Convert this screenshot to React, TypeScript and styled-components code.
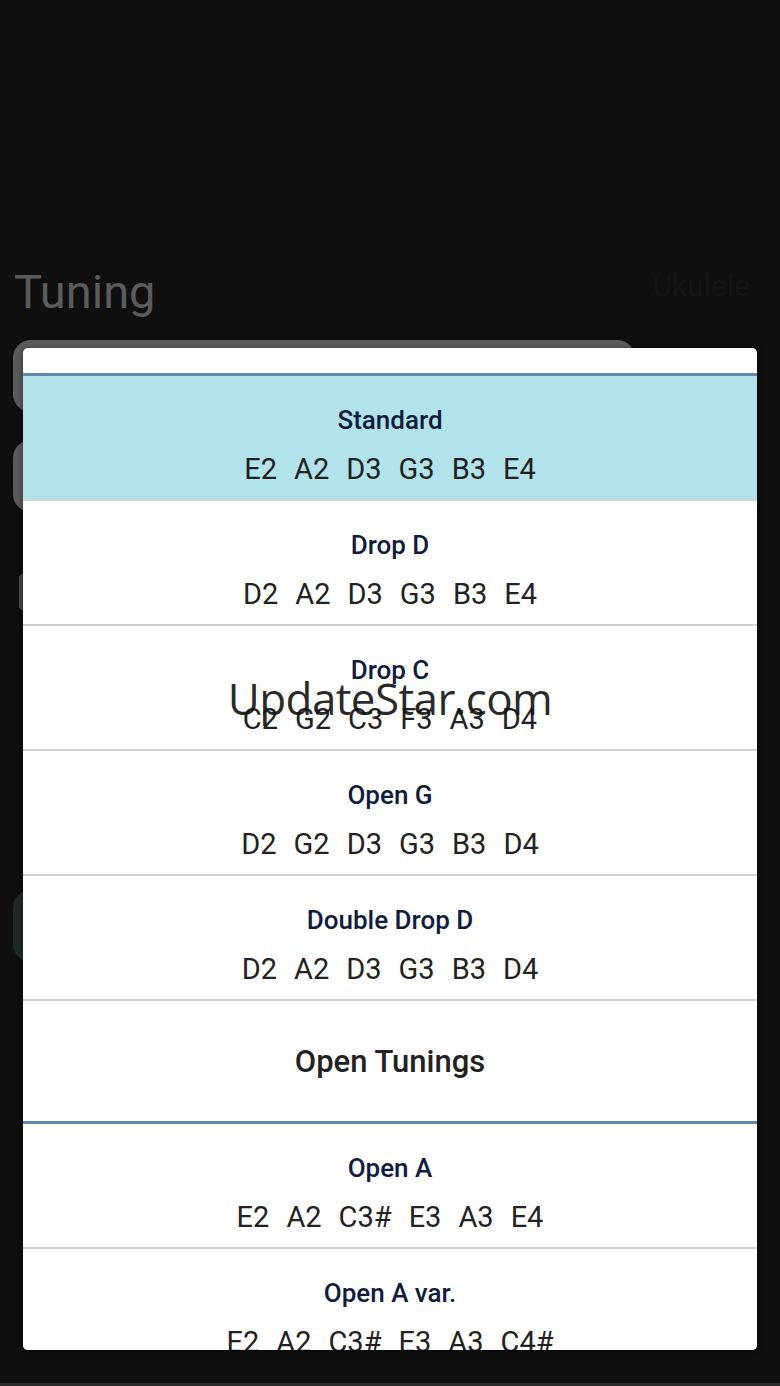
import styled, { createGlobalStyle } from 'styled-components';

const GlobalStyle = createGlobalStyle`
  html, body {
    margin: 0;
    padding: 0;
    background: #0f0f10;
  }
  body {
    font-family: Roboto, "Liberation Sans", sans-serif;
  }
`;

const Screen = styled.div`
  position: relative;
  width: 780px;
  height: 1386px;
  overflow: hidden;
  background: #0f0f10;
`;

const Backdrop = styled.div`
  display: flex;
  flex-direction: column;
  padding: 262px 0 0 13px;
`;

const TopRow = styled.div`
  display: flex;
  justify-content: space-between;
  align-items: flex-start;
  padding-right: 30px;
  height: 72px;
`;

const ScreenTitle = styled.div`
  font-size: 47px;
  color: #5b5b5b;
  padding-left: 1px;
  line-height: 60px;
`;

const FaintLabel = styled.div`
  font-size: 30px;
  color: #151516;
  padding-top: 6px;
`;

const FieldBox = styled.div<{ $width: number; $top: number; $color?: string }>`
  width: ${({ $width }) => $width}px;
  height: 72px;
  margin-top: ${({ $top }) => $top}px;
  border-radius: 18px;
  background: ${({ $color }) => $color || '#5b5b5b'};
`;

const SideTab = styled.div`
  width: 10px;
  height: 36px;
  margin: 62px 0 0 6px;
  border-radius: 4px;
  background: #4a4a4a;
`;

const Dialog = styled.div`
  position: absolute;
  left: 23px;
  top: 348px;
  width: 734px;
  height: 1002px;
  background: #ffffff;
  border-radius: 5px;
  overflow: hidden;
  box-shadow: 0 2px 6px rgba(0, 0, 0, 0.5);
`;

const DialogHead = styled.div`
  height: 25px;
  border-bottom: 3px solid #5f89b1;
`;

const Item = styled.div<{ $selected?: boolean }>`
  height: 94px;
  display: flex;
  flex-direction: column;
  align-items: center;
  padding-top: 29px;
  gap: 17px;
  background: ${({ $selected }) => ($selected ? '#b3e3ea' : '#ffffff')};
  border-bottom: 2px solid #d2d2d2;
`;

const ItemName = styled.div`
  font-size: 26px;
  font-weight: 500;
  color: #0f1c3f;
  line-height: 30px;
`;

const Notes = styled.div`
  display: flex;
  gap: 17px;
  font-size: 29px;
  color: #222222;
  line-height: 34px;
`;

const SectionHeader = styled.div`
  height: 120px;
  display: flex;
  align-items: center;
  justify-content: center;
  font-size: 31px;
  font-weight: 500;
  color: #222222;
  border-bottom: 3px solid #5f89b1;
`;

const Watermark = styled.div`
  position: absolute;
  left: 0;
  right: 0;
  top: 668px;
  text-align: center;
  font-family: "Open Sans", "Noto Sans", sans-serif;
  font-size: 44px;
  letter-spacing: -0.6px;
  color: rgba(20, 20, 20, 0.92);
  pointer-events: none;
`;

const BottomBar = styled.div`
  position: absolute;
  left: 0;
  right: 0;
  bottom: 0;
  height: 3px;
  background: #2a2a2c;
`;

type Tuning = { name: string; notes: string[] };

const standardTunings: Tuning[] = [
  { name: 'Standard', notes: ['E2', 'A2', 'D3', 'G3', 'B3', 'E4'] },
  { name: 'Drop D', notes: ['D2', 'A2', 'D3', 'G3', 'B3', 'E4'] },
  { name: 'Drop C', notes: ['C2', 'G2', 'C3', 'F3', 'A3', 'D4'] },
  { name: 'Open G', notes: ['D2', 'G2', 'D3', 'G3', 'B3', 'D4'] },
  { name: 'Double Drop D', notes: ['D2', 'A2', 'D3', 'G3', 'B3', 'D4'] },
];

const openTunings: Tuning[] = [
  { name: 'Open A', notes: ['E2', 'A2', 'C3#', 'E3', 'A3', 'E4'] },
  { name: 'Open A var.', notes: ['E2', 'A2', 'C3#', 'E3', 'A3', 'C4#'] },
];

const TuningItem = ({ tuning, selected }: { tuning: Tuning; selected?: boolean }) => (
  <Item $selected={selected}>
    <ItemName>{tuning.name}</ItemName>
    <Notes>
      {tuning.notes.map((n, i) => (
        <span key={i}>{n}</span>
      ))}
    </Notes>
  </Item>
);

const App = () => {
  return (
    <>
      <GlobalStyle />
      <Screen>
        <Backdrop>
          <TopRow>
            <ScreenTitle>Tuning</ScreenTitle>
            <FaintLabel>Ukulele</FaintLabel>
          </TopRow>
          <FieldBox $width={622} $top={6} />
          <FieldBox $width={300} $top={28} />
          <SideTab />
          <FieldBox $width={60} $top={280} $color="#1d2c27" />
        </Backdrop>

        <Dialog>
          <DialogHead />
          {standardTunings.map((t, i) => (
            <TuningItem key={t.name} tuning={t} selected={i === 0} />
          ))}
          <SectionHeader>Open Tunings</SectionHeader>
          {openTunings.map((t) => (
            <TuningItem key={t.name} tuning={t} />
          ))}
        </Dialog>

        <Watermark>UpdateStar.com</Watermark>
        <BottomBar />
      </Screen>
    </>
  );
};

export default App;
